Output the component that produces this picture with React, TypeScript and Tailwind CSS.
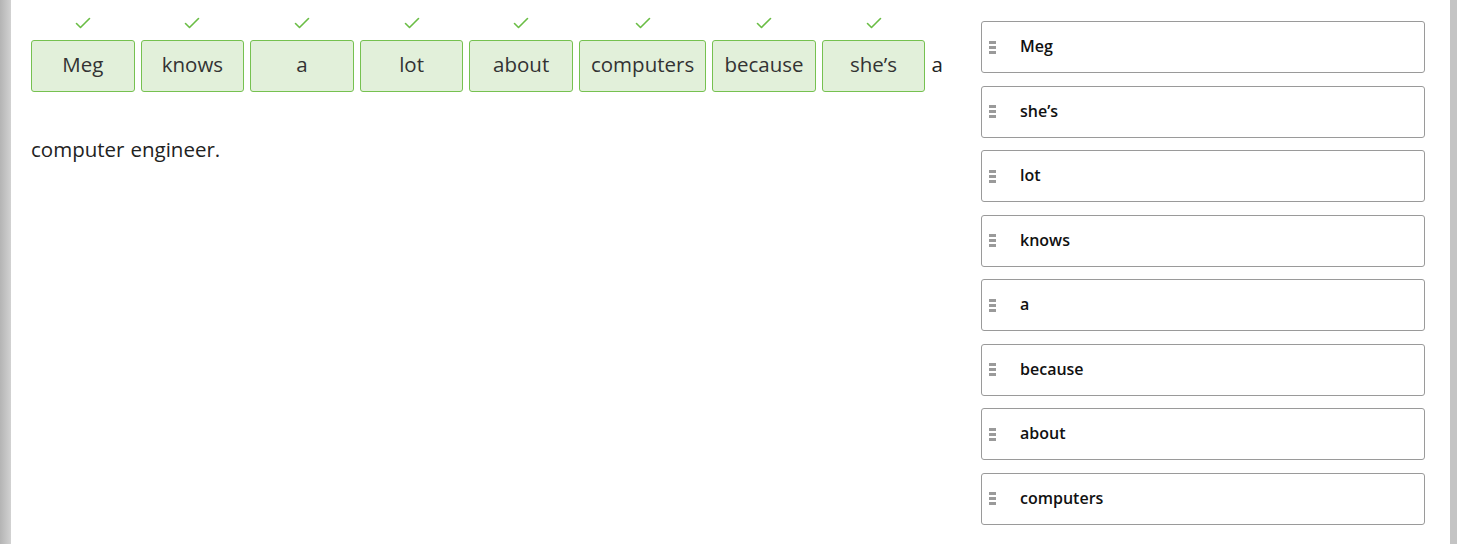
import React from 'react';

const answer = ['Meg', 'knows', 'a', 'lot', 'about', 'computers', 'because', 'she’s'];
const tail = ['a', 'computer', 'engineer.'];
const choices = ['Meg', 'she’s', 'lot', 'knows', 'a', 'because', 'about', 'computers'];

const Check = () => (
  <svg width="16" height="12" viewBox="0 0 16 12" fill="none">
    <path d="M1.5 6.5 L5.5 10.5 L14.5 1.5" stroke="#6abd45" strokeWidth="1.6" strokeLinecap="round" strokeLinejoin="round" />
  </svg>
);

const Handle = () => (
  <div className="flex flex-col gap-[2px]">
    <span className="block w-[7px] h-[3px] bg-[#9a9a9a]" />
    <span className="block w-[7px] h-[3px] bg-[#9a9a9a]" />
    <span className="block w-[7px] h-[3px] bg-[#9a9a9a]" />
  </div>
);

const App: React.FC = () => {
  return (
    <div className="flex w-[1457px] h-[544px] bg-white overflow-hidden" style={{ fontFamily: '"Open Sans", "Liberation Sans", sans-serif' }}>
      {/* page shadow strips */}
      <div className="w-[11px] h-full bg-gradient-to-r from-[#b4b4b4] to-[#d2d2d2]" />

      <div className="flex-1 flex pl-[20px] pr-[25px]">
        {/* sentence */}
        <div className="w-[930px] pt-[16px]">
          <div className="flex flex-wrap gap-x-[6px] gap-y-[9px]">
            {answer.map((w, i) => (
              <div key={i} className="flex flex-col items-center">
                <div className="h-[24px] flex items-start pt-[1px] justify-center">
                  <Check />
                </div>
                <div className="h-[52px] min-w-[103.6px] px-[11px] flex items-center justify-center rounded-[3px] border border-[#76c150] bg-[#e2f0da] text-[20.5px] leading-none pb-[3px] text-[#333]">
                  {w}
                </div>
              </div>
            ))}
            {tail.map((w, i) => (
              <div key={'t' + i} className="flex flex-col">
                <div className="h-[24px]" />
                <div className="h-[52px] flex items-center text-[20.5px] leading-none pb-[3px] text-[#222]">{w}</div>
              </div>
            ))}
          </div>
        </div>

        {/* draggable choices */}
        <div className="ml-auto w-[444px] pt-[21px] flex flex-col gap-[12.5px]">
          {choices.map((c, i) => (
            <div key={i} className="h-[52px] flex items-center rounded-[3px] border border-[#9a9a9a] bg-white pl-[7px]">
              <Handle />
              <span className="ml-[24px] text-[16px] leading-none pb-[2px] font-semibold text-[#111]">{c}</span>
            </div>
          ))}
        </div>
      </div>

      <div className="w-[7px] h-full bg-[#c4c4c4]" />
    </div>
  );
};

export default App;
